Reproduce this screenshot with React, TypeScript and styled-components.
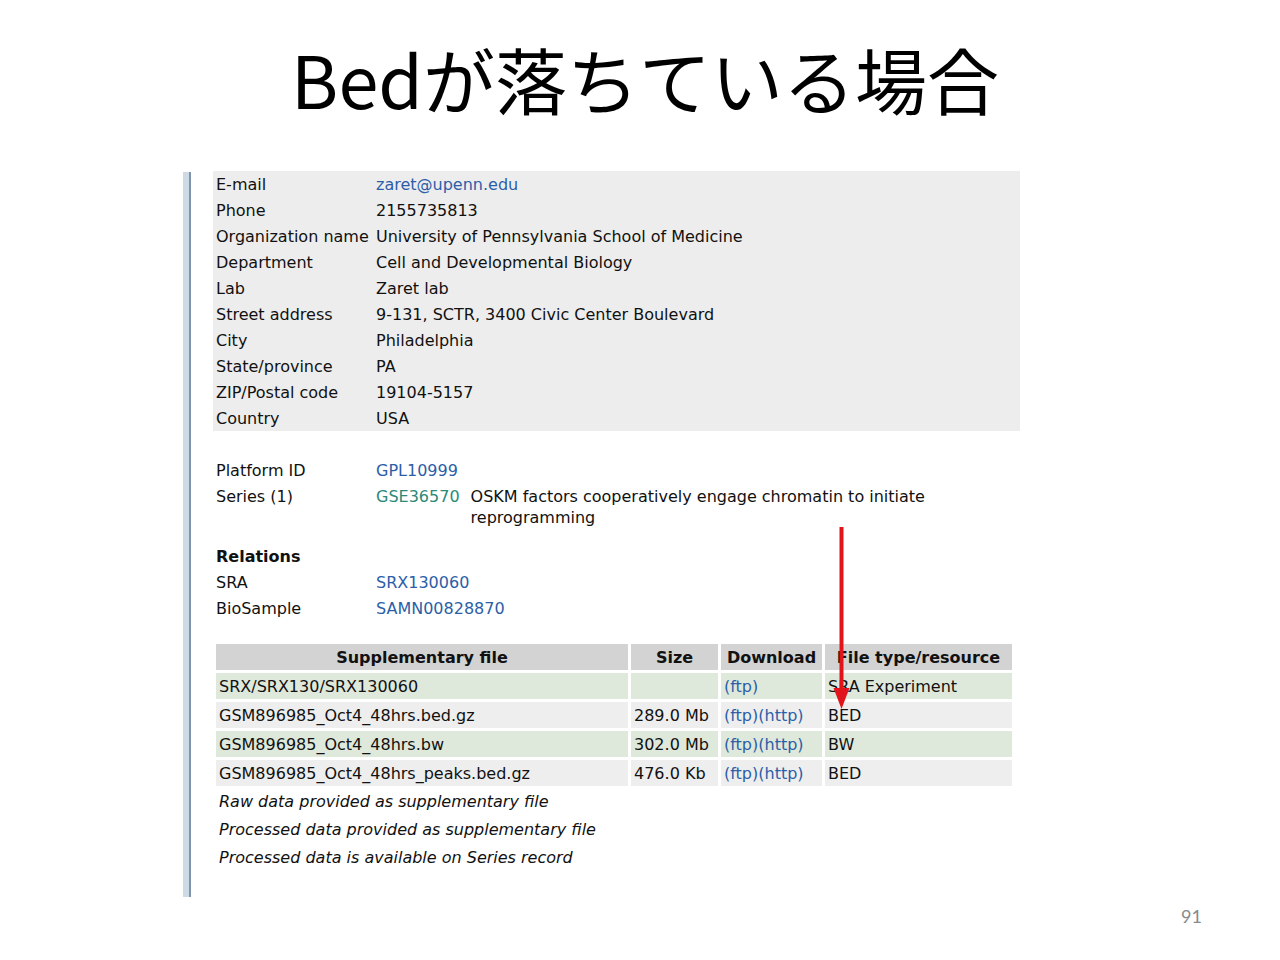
import React from "react";
import styled, { createGlobalStyle } from "styled-components";

const Global = createGlobalStyle`
  html, body { margin: 0; padding: 0; background: #ffffff; }
  body { font-family: "DejaVu Sans", Verdana, sans-serif; }
`;

const Page = styled.div`
  position: relative;
  width: 1280px;
  height: 960px;
  background: #fff;
  display: flex;
  flex-direction: column;
  overflow: hidden;
`;

const Title = styled.h1`
  margin: 0;
  height: 172px;
  padding-top: 28px;
  box-sizing: border-box;
  text-align: center;
  font-family: "Noto Sans CJK JP", sans-serif;
  font-weight: 400;
  font-size: 72px;
  line-height: 100px;
  color: #000;
  padding-left: 10px;
`;

const Body = styled.div`
  display: flex;
  height: 725px;
  margin-left: 183px;
`;

const SideBar = styled.div`
  width: 6px;
  background: #cfdbe4;
  border-right: 2px solid #7f95ae;
  flex: none;
`;

const Content = styled.div`
  padding-left: 22px;
  margin-top: -1px;
  width: 807px;
  font-size: 16px;
  color: #111;
`;

const InfoBox = styled.div`
  background: #ededed;
  width: 807px;
`;

const Row = styled.div`
  display: grid;
  grid-template-columns: 160px 1fr;
  padding: 3px 0 2px 3px;
  line-height: 21px;
`;

const Label = styled.div<{ $bold?: boolean }>`
  font-weight: ${(p) => (p.$bold ? 700 : 400)};
  white-space: nowrap;
`;

const Value = styled.div``;

const Link = styled.span<{ $green?: boolean }>`
  color: ${(p) => (p.$green ? "#2b8a78" : "#2c5ea8")};
`;

const Spacer = styled.div<{ $h: number }>`
  height: ${(p) => p.$h}px;
`;

const SeriesValue = styled.div`
  display: grid;
  grid-template-columns: auto 1fr;
  column-gap: 11px;
`;

const Table = styled.table`
  border-collapse: separate;
  border-spacing: 3px;
  table-layout: fixed;
  width: 802px;
  margin-top: 20px;
  font-size: 16px;
`;

const Th = styled.th`
  background: #d3d3d3;
  height: 26px;
  padding: 0 3px;
  font-weight: 700;
  text-align: center;
  white-space: nowrap;
  color: #111;
`;

const Td = styled.td<{ $tone?: "green" | "grey" | "none"; $italic?: boolean }>`
  height: ${(p) => (p.$tone === "none" ? 25 : 26)}px;
  padding: 0 3px;
  white-space: nowrap;
  overflow: visible;
  background: ${(p) =>
    p.$tone === "green" ? "#dfe9db" : p.$tone === "grey" ? "#eeeeee" : "transparent"};
  font-style: ${(p) => (p.$italic ? "italic" : "normal")};
  color: #111;
`;

const Footer = styled.div`
  display: flex;
  justify-content: flex-end;
  padding-right: 78px;
  padding-top: 8px;
  font-family: "Lato", "Open Sans", sans-serif;
  font-size: 18px;
  color: #8a8a8a;
`;

const Arrow = styled.svg`
  position: absolute;
  left: 829px;
  top: 525px;
`;

const info: [string, React.ReactNode][] = [
  ["E-mail", <Link>zaret@upenn.edu</Link>],
  ["Phone", "2155735813"],
  ["Organization name", "University of Pennsylvania School of Medicine"],
  ["Department", "Cell and Developmental Biology"],
  ["Lab", "Zaret lab"],
  ["Street address", "9-131, SCTR, 3400 Civic Center Boulevard"],
  ["City", "Philadelphia"],
  ["State/province", "PA"],
  ["ZIP/Postal code", "19104-5157"],
  ["Country", "USA"],
];

const files: { name: string; size: string; dl: string; type: string; tone: "green" | "grey" }[] = [
  { name: "SRX/SRX130/SRX130060", size: "", dl: "(ftp)", type: "SRA Experiment", tone: "green" },
  { name: "GSM896985_Oct4_48hrs.bed.gz", size: "289.0 Mb", dl: "(ftp)(http)", type: "BED", tone: "grey" },
  { name: "GSM896985_Oct4_48hrs.bw", size: "302.0 Mb", dl: "(ftp)(http)", type: "BW", tone: "green" },
  { name: "GSM896985_Oct4_48hrs_peaks.bed.gz", size: "476.0 Kb", dl: "(ftp)(http)", type: "BED", tone: "grey" },
];

const notes = [
  "Raw data provided as supplementary file",
  "Processed data provided as supplementary file",
  "Processed data is available on Series record",
];

export default function App() {
  return (
    <Page>
      <Global />
      <Title>Bedが落ちている場合</Title>
      <Body>
        <SideBar />
        <Content>
          <InfoBox>
            {info.map(([k, v]) => (
              <Row key={k}>
                <Label>{k}</Label>
                <Value>{v}</Value>
              </Row>
            ))}
          </InfoBox>
          <Spacer $h={26} />
          <Row>
            <Label>Platform ID</Label>
            <Value>
              <Link>GPL10999</Link>
            </Value>
          </Row>
          <Row>
            <Label>Series (1)</Label>
            <SeriesValue>
              <Link $green>GSE36570</Link>
              <span>OSKM factors cooperatively engage chromatin to initiate reprogramming</span>
            </SeriesValue>
          </Row>
          <Spacer $h={13} />
          <Row>
            <Label $bold>Relations</Label>
            <Value />
          </Row>
          <Row>
            <Label>SRA</Label>
            <Value>
              <Link>SRX130060</Link>
            </Value>
          </Row>
          <Row>
            <Label>BioSample</Label>
            <Value>
              <Link>SAMN00828870</Link>
            </Value>
          </Row>
          <Table>
            <colgroup>
              <col style={{ width: 412 }} />
              <col style={{ width: 87 }} />
              <col style={{ width: 101 }} />
              <col style={{ width: 187 }} />
            </colgroup>
            <thead>
              <tr>
                <Th>Supplementary file</Th>
                <Th>Size</Th>
                <Th>Download</Th>
                <Th>File type/resource</Th>
              </tr>
            </thead>
            <tbody>
              {files.map((f) => (
                <tr key={f.name}>
                  <Td $tone={f.tone}>{f.name}</Td>
                  <Td $tone={f.tone}>{f.size}</Td>
                  <Td $tone={f.tone}>
                    <Link>{f.dl}</Link>
                  </Td>
                  <Td $tone={f.tone}>{f.type}</Td>
                </tr>
              ))}
              {notes.map((n) => (
                <tr key={n}>
                  <Td colSpan={4} $tone="none" $italic>
                    {n}
                  </Td>
                </tr>
              ))}
            </tbody>
          </Table>
        </Content>
      </Body>
      <Footer>91</Footer>
      <Arrow width="25" height="186" viewBox="0 0 25 186">
        <line x1="12.5" y1="2" x2="12.5" y2="168" stroke="#e1141c" strokeWidth="4" />
        <polygon points="4.5,163 20.5,163 12.5,184" fill="#e1141c" />
      </Arrow>
    </Page>
  );
}
